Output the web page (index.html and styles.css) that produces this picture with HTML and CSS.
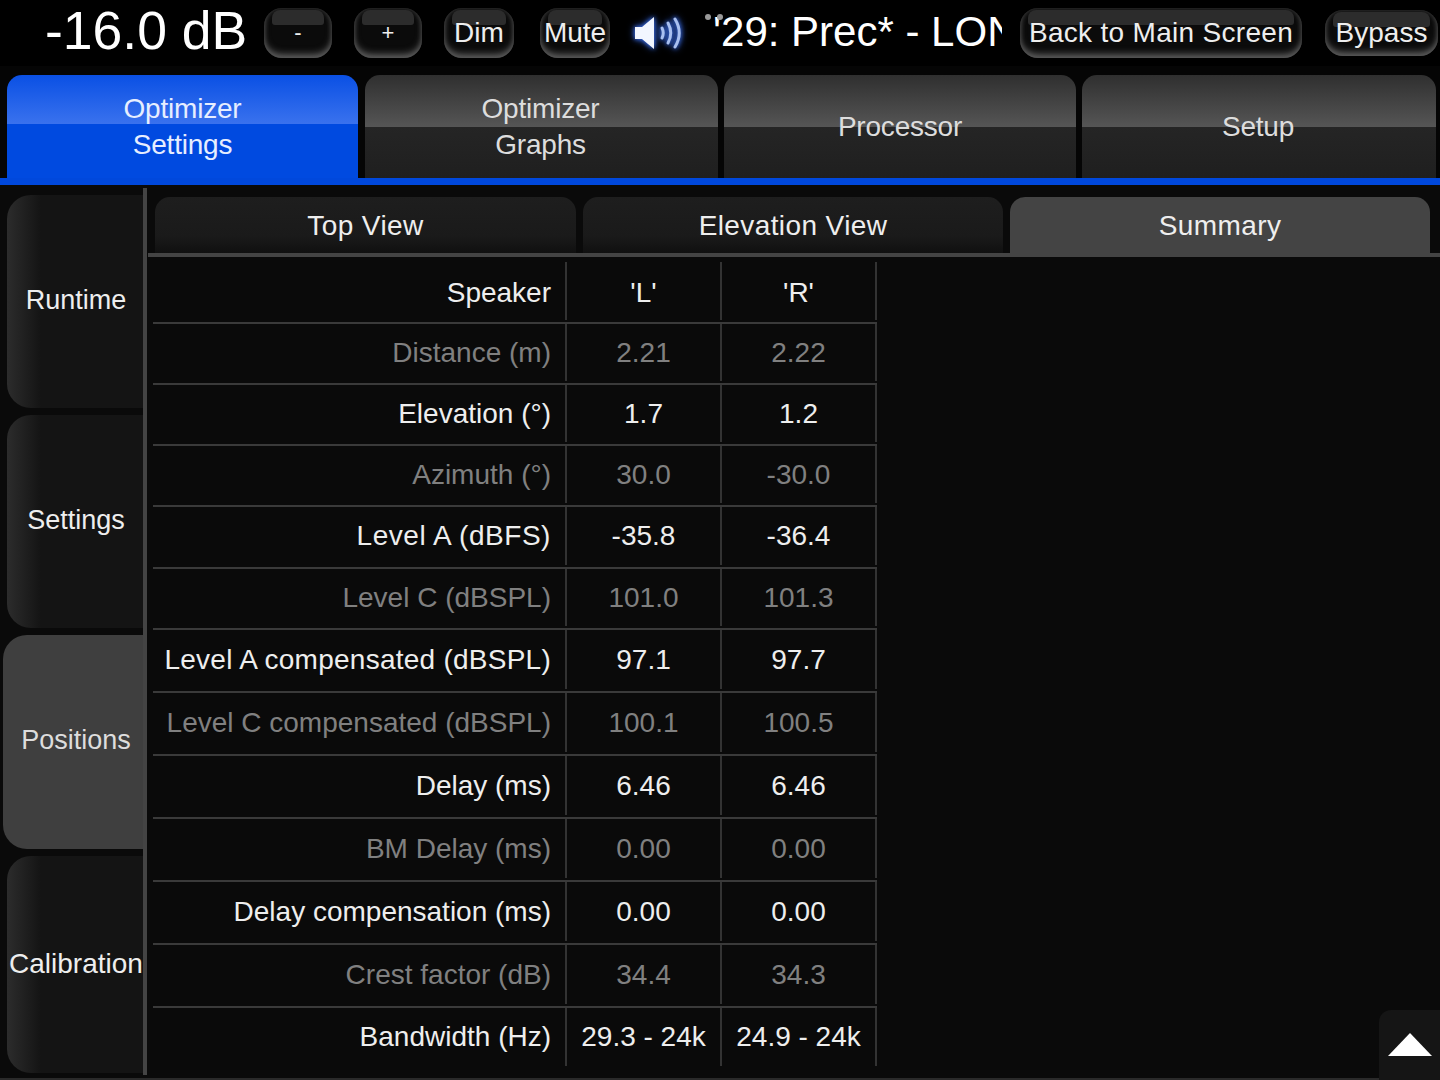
FILE: index.html
```html
<!DOCTYPE html>
<html lang="en">

<head>
    <meta charset="UTF-8">
    <meta name="viewport" content="width=device-width, initial-scale=1.0">
    <title>Optimizer Settings - Summary</title>
    <link rel="stylesheet" href="styles.css">
</head>

<body>
    <div class="app">
        <header class="topbar">
            <div class="volume">-16.0 dB</div>
            <button class="hw-btn btn-vol">-</button>
            <button class="hw-btn btn-vol btn-plus">+</button>
            <button class="hw-btn btn-dim">Dim</button>
            <button class="hw-btn btn-mute">Mute</button>
            <svg class="speaker" viewBox="0 0 50 36" width="50" height="36">
                <path d="M1 12h7L20 2v32L8 24H1z" fill="#f2f6ff"></path>
                <g fill="none" stroke="#a9c0f0" stroke-width="3" stroke-linecap="round">
                    <path d="M28 13q2.500 5 0 10"></path>
                    <path d="M34 8q5.500 10 0 20"></path>
                    <path d="M41 4q8.500 14 0 28"></path>
                </g>
            </svg>
            <div class="preset">
                <span class="dots"><i></i><i></i></span>
                <span class="preset-text">'29: Prec* - LONG</span>
            </div>
            <button class="hw-btn btn-back">Back to Main Screen</button>
            <button class="hw-btn btn-bypass">Bypass</button>
        </header>

        <nav class="tabs">
            <div class="tab active">Optimizer<br>Settings</div>
            <div class="tab tab-2">Optimizer<br>Graphs</div>
            <div class="tab tab-3">Processor</div>
            <div class="tab tab-4">Setup</div>
        </nav>

        <main class="main">
            <aside class="side">
                <div class="side-tab">Runtime</div>
                <div class="side-tab">Settings</div>
                <div class="side-tab active">Positions</div>
                <div class="side-tab last">Calibration</div>
            </aside>
            <div class="rail"></div>

            <section class="content">
                <div class="subtabs">
                    <div class="subtab">Top View</div>
                    <div class="subtab">Elevation View</div>
                    <div class="subtab active">Summary</div>
                </div>

                <div class="table">
                    <div class="row first">
                        <div class="cell name">Speaker</div>
                        <div class="cell">'L'</div>
                        <div class="cell">'R'</div>
                    </div>
                    <div class="row dim">
                        <div class="cell name">Distance (m)</div>
                        <div class="cell">2.21</div>
                        <div class="cell">2.22</div>
                    </div>
                    <div class="row">
                        <div class="cell name">Elevation (°)</div>
                        <div class="cell">1.7</div>
                        <div class="cell">1.2</div>
                    </div>
                    <div class="row dim">
                        <div class="cell name">Azimuth (°)</div>
                        <div class="cell">30.0</div>
                        <div class="cell">-30.0</div>
                    </div>
                    <div class="row">
                        <div class="cell name wide">Level A (dBFS)</div>
                        <div class="cell">-35.8</div>
                        <div class="cell">-36.4</div>
                    </div>
                    <div class="row dim">
                        <div class="cell name">Level C (dBSPL)</div>
                        <div class="cell">101.0</div>
                        <div class="cell">101.3</div>
                    </div>
                    <div class="row">
                        <div class="cell name wider">Level A compensated (dBSPL)</div>
                        <div class="cell">97.1</div>
                        <div class="cell">97.7</div>
                    </div>
                    <div class="row dim">
                        <div class="cell name">Level C compensated (dBSPL)</div>
                        <div class="cell">100.1</div>
                        <div class="cell">100.5</div>
                    </div>
                    <div class="row">
                        <div class="cell name">Delay (ms)</div>
                        <div class="cell">6.46</div>
                        <div class="cell">6.46</div>
                    </div>
                    <div class="row dim">
                        <div class="cell name">BM Delay (ms)</div>
                        <div class="cell">0.00</div>
                        <div class="cell">0.00</div>
                    </div>
                    <div class="row">
                        <div class="cell name">Delay compensation (ms)</div>
                        <div class="cell">0.00</div>
                        <div class="cell">0.00</div>
                    </div>
                    <div class="row dim">
                        <div class="cell name">Crest factor (dB)</div>
                        <div class="cell">34.4</div>
                        <div class="cell">34.3</div>
                    </div>
                    <div class="row last">
                        <div class="cell name">Bandwidth (Hz)</div>
                        <div class="cell">29.3 - 24k</div>
                        <div class="cell">24.9 - 24k</div>
                    </div>
                </div>
            </section>
        </main>

        <button class="scroll-up"><span class="arrow"></span></button>
    </div>
</body>

</html>
```

FILE: styles.css
```css
* {
    box-sizing: border-box;
}

body {
    margin: 0;
    padding: 0;
    background-color: #000;
    color: #eee;
    font-family: "Liberation Sans", Arial, sans-serif;
    font-size: 28px;
}

button {
    font-family: inherit;
    color: inherit;
    padding: 0;
    border: none;
    cursor: pointer;
}

.app {
    position: relative;
    width: 1440px;
    height: 1080px;
    overflow: hidden;
    display: flex;
    flex-direction: column;
}

/* top bar */
.topbar {
    height: 66px;
    flex: none;
    display: flex;
    align-items: center;
    background-color: #000;
}

.volume {
    width: 264px;
    padding: 0 0 6px 45px;
    font-size: 53.500px;
    color: #fff;
    white-space: nowrap;
}

.hw-btn {
    position: relative;
    isolation: isolate;
    height: 50px;
    font-size: 28px;
    line-height: 48px;
    white-space: nowrap;
    border-radius: 18px;
    background-color: #0b0b0b;
    box-shadow: inset 0 -5px 7px -1px #5a5a5a, inset 0 0 4px 1px #2e2e2e;
    flex: none;
}

.hw-btn::before {
    content: "";
    position: absolute;
    z-index: -1;
    left: 8px;
    right: 8px;
    top: 2px;
    height: 15px;
    border-radius: 8px 8px 3px 3px;
    background-color: #2c2c2c;
}

.btn-vol {
    width: 68px;
    margin-right: 22px;
    font-size: 22px;
}

.btn-dim {
    width: 70px;
    margin-right: 26px;
}

.btn-mute {
    width: 70px;
    margin-right: 24px;
}

.btn-back {
    width: 282px;
    margin-right: 23px;
    letter-spacing: .3px;
}

.btn-bypass {
    width: 113px;
    height: 46px;
    line-height: 44px;
}

.speaker {
    flex: none;
    margin-right: 20px;
    filter: drop-shadow(0 0 2px #3c6ce0) drop-shadow(0 0 3px #2a55c0);
}

.preset {
    position: relative;
    width: 298px;
    margin-right: 18px;
    height: 50px;
    overflow: hidden;
    font-size: 42px;
    line-height: 48px;
    color: #fff;
    white-space: nowrap;
}

.preset-text {
    display: block;
    margin-left: 9px;
}

.dots i {
    position: absolute;
    top: 6px;
    width: 6px;
    height: 6px;
    border-radius: 50%;
    background-color: #999;
}

.dots i:first-child {
    left: 1px;
}

.dots i:last-child {
    left: 13px;
}

/* main tabs */
.tabs {
    height: 119px;
    flex: none;
    display: flex;
    padding: 9px 4px 0 7px;
    border-bottom: 7px solid #0048dc;
    background-color: #050505;
}

.tab {
    width: 351px;
    margin-right: 7px;
    height: 103px;
    display: flex;
    align-items: center;
    justify-content: center;
    text-align: center;
    line-height: 36px;
    letter-spacing: -.2px;
    border-radius: 15px 15px 0 0;
    color: #ddd;
    background: linear-gradient(to bottom, #2f2f2f 0%, #555 50%, #252525 50%, #1f1f1f 100%);
}

.tab-2 {
    width: 353px;
    margin-right: 6px;
    padding-right: 2px;
}

.tab-3 {
    width: 352px;
    margin-right: 6px;
}

.tab-4 {
    width: 354px;
    margin-right: 0;
    padding-right: 2px;
}

.tab.active {
    color: #e6eeff;
    background: linear-gradient(to bottom, #0a50e4 0%, #3a72ee 48%, #004ae0 48%, #004ae0 100%);
}

/* page body */
.main {
    flex: 1;
    display: flex;
    background-color: #0a0a0a;
    border-bottom: 2px solid #2a2a2a;
}

.side {
    width: 143px;
    flex: none;
    padding: 10px 0 0 7px;
    display: flex;
    flex-direction: column;
    gap: 7px;
}

.side-tab {
    height: 213px;
    display: flex;
    align-items: center;
    justify-content: center;
    padding: 0 0 3px 2px;
    font-size: 27px;
    border-radius: 24px 0 0 24px;
    background: linear-gradient(to right, #2c2c2c 0, #141414 34px);
    white-space: nowrap;
}

.side-tab.active {
    margin-left: -4px;
    height: 214px;
    padding-left: 6px;
    color: #ddd;
    background: #3f3f3f;
}

.side-tab.last {
    height: 217px;
    padding-bottom: 1px;
    font-size: 28px;
}

.rail {
    width: 4px;
    flex: none;
    margin: 3px 0 3px;
    background-color: #444;
}

.content {
    flex: 1;
    padding-top: 12px;
}

.subtabs {
    display: flex;
    gap: 7px;
    height: 60px;
    padding-left: 7px;
    border-bottom: 4px solid #444;
    margin-left: 1px;
    letter-spacing: .4px;
}

.subtab {
    width: 420px;
    display: flex;
    align-items: center;
    justify-content: center;
    height: 56px;
    padding-top: 2px;
    border-radius: 15px 15px 0 0;
    background: linear-gradient(to bottom, #1e1e1e 0%, #1a1a1a 70%, #101010 100%);
}

.subtab:first-child {
    width: 421px;
}

.subtab.active {
    background: #444;
}

/* summary table */
.table {
    width: 724px;
    margin: 5px 0 0 6px;
    display: grid;
    grid-template-rows: 60px 61px 61px 61px 62px 61px 63px 63px 63px 63px 63px 63px 64px;
}

.row {
    display: grid;
    grid-template-columns: 412px 155px 157px;
    border-top: 2px solid #3a3a3a;
    padding-bottom: 2px;
}

.row.first {
    border-top: none;
}

.row.first .cell {
    padding-top: 4px;
}

.row.last {
    padding-bottom: 4px;
}

.row.dim {
    color: #808080;
}

.cell {
    display: flex;
    align-items: center;
    justify-content: center;
    border-left: 2px solid #333;
    white-space: nowrap;
}

.cell:last-child {
    border-right: 2px solid #333;
}

.cell.name {
    justify-content: flex-end;
    padding-right: 14px;
    border-left: none;
}

.cell.wide {
    letter-spacing: .55px;
}

.cell.wider {
    letter-spacing: .25px;
}

/* scroll button over the corner */
.scroll-up {
    position: absolute;
    right: 0;
    bottom: 0;
    width: 61px;
    height: 70px;
    border-radius: 12px 0 0 0;
    background-color: #151515;
}

.arrow {
    position: absolute;
    left: 9px;
    top: 23px;
    width: 0;
    height: 0;
    border-left: 22px solid transparent;
    border-right: 22px solid transparent;
    border-bottom: 23px solid #fff;
}
```
